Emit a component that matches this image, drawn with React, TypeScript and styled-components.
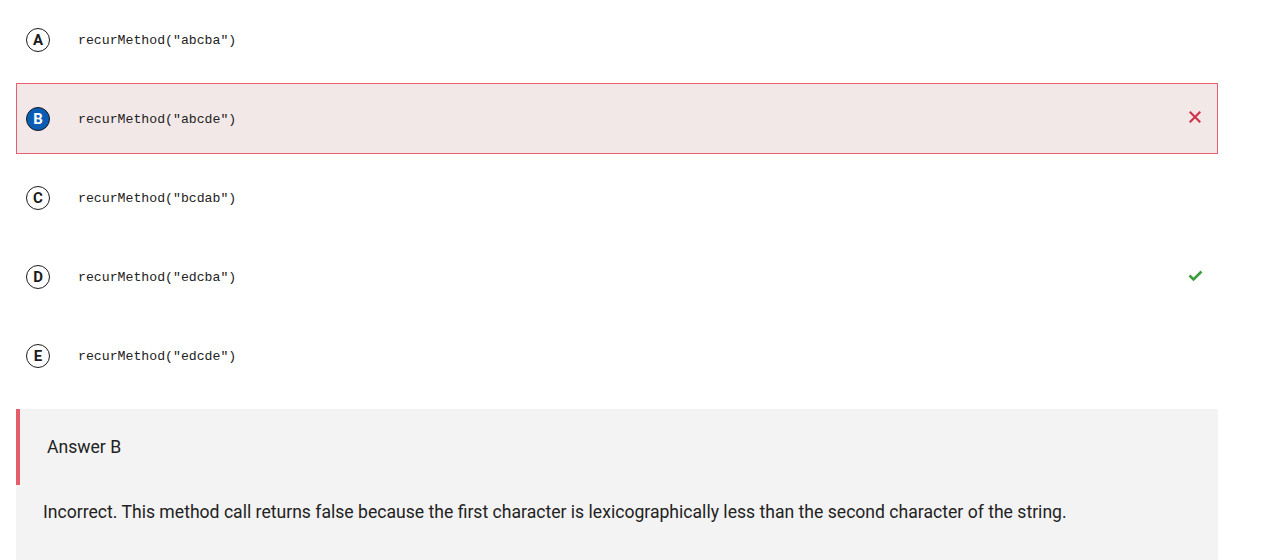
import React from "react";
import styled, { createGlobalStyle } from "styled-components";

const Global = createGlobalStyle`
  html, body { margin: 0; padding: 0; background: #ffffff; }
  body { font-family: Roboto, "Liberation Sans", sans-serif; color: #222; }
`;

const Page = styled.div`
  padding: 4px 0 0 16px;
  width: 1202px;
  display: flex;
  flex-direction: column;
`;

const List = styled.div`
  display: flex;
  flex-direction: column;
  gap: 8px;
`;

const Row = styled.div<{ $wrong?: boolean }>`
  height: 71px;
  box-sizing: border-box;
  display: flex;
  align-items: center;
  padding: 1px 14px 0 9px;
  border: 1px solid ${(p) => (p.$wrong ? "#e8606f" : "transparent")};
  background: ${(p) => (p.$wrong ? "#f3e8e8" : "transparent")};
`;

const Badge = styled.span<{ $selected?: boolean }>`
  width: 24px;
  height: 24px;
  box-sizing: border-box;
  border-radius: 50%;
  border: 1.5px solid #1b1b1b;
  background: ${(p) => (p.$selected ? "#0a5db5" : "#ffffff")};
  color: ${(p) => (p.$selected ? "#ffffff" : "#1b1b1b")};
  display: flex;
  align-items: center;
  justify-content: center;
  font-family: Roboto, "Liberation Sans", sans-serif;
  font-weight: 700;
  font-size: 15px;
  line-height: 1;
  flex: none;
`;

const Code = styled.span`
  margin-left: 28px;
  font-family: "Liberation Mono", "DejaVu Sans Mono", monospace;
  font-size: 13.2px;
  color: #222;
  flex: 1;
`;

const Mark = styled.span`
  width: 16px;
  height: 16px;
  margin-top: -4px;
  display: flex;
  align-items: center;
  justify-content: center;
`;

const Feedback = styled.div`
  margin-top: 18px;
  background: #f3f3f3;
  display: flex;
  flex-direction: column;
  padding-bottom: 40px;
`;

const FeedbackHead = styled.div`
  height: 76px;
  border-left: 4px solid #e35d6a;
  display: flex;
  align-items: center;
  padding-left: 27px;
  font-size: 17.6px;
  color: #222;
`;

const FeedbackBody = styled.div`
  padding: 16px 27px 0;
  font-size: 17.6px;
  color: #222;
  line-height: 22px;
`;

const Cross = () => (
  <svg width="12" height="12" viewBox="0 0 12 12">
    <path d="M1.5 1.5 L10.5 10.5 M10.5 1.5 L1.5 10.5" stroke="#d1344a" strokeWidth="2.2" strokeLinecap="square" />
  </svg>
);

const Check = () => (
  <svg width="15" height="13" viewBox="0 0 15 13">
    <path d="M1.5 6.5 L5.5 10.5 L13.5 2.5" stroke="#3e9d3a" strokeWidth="2.6" fill="none" />
  </svg>
);

const options = [
  { letter: "A", text: "recurMethod(\u2033abcba\u2033)" },
  { letter: "B", text: "recurMethod(\u2033abcde\u2033)", wrong: true },
  { letter: "C", text: "recurMethod(\u2033bcdab\u2033)" },
  { letter: "D", text: "recurMethod(\u2033edcba\u2033)", correct: true },
  { letter: "E", text: "recurMethod(\u2033edcde\u2033)" },
];

export default function App() {
  return (
    <>
      <Global />
      <Page>
        <List>
          {options.map((o) => (
            <Row key={o.letter} $wrong={o.wrong}>
              <Badge $selected={o.wrong}>{o.letter}</Badge>
              <Code>{o.text}</Code>
              <Mark>{o.wrong ? <Cross /> : o.correct ? <Check /> : null}</Mark>
            </Row>
          ))}
        </List>
        <Feedback>
          <FeedbackHead>Answer B</FeedbackHead>
          <FeedbackBody>
            Incorrect. This method call returns false because the first character is lexicographically less than the second character of the string.
          </FeedbackBody>
        </Feedback>
      </Page>
    </>
  );
}
